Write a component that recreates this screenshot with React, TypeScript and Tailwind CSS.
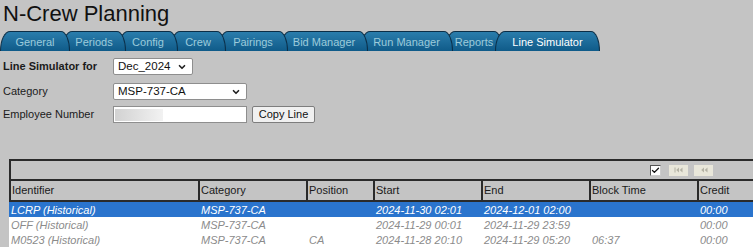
import { ChevronDown, Check } from "lucide-react";

interface Tab {
  label: string;
  width: string;
  z: string;
  active?: boolean;
}

const tabs: Tab[] = [
  { label: "General", width: "w-[70px]", z: "z-[9]" },
  { label: "Periods", width: "w-[64px]", z: "z-[8]" },
  { label: "Config", width: "w-[60px]", z: "z-[7]" },
  { label: "Crew", width: "w-[56px]", z: "z-[6]" },
  { label: "Pairings", width: "w-[70px]", z: "z-[5]" },
  { label: "Bid Manager", width: "w-[88px]", z: "z-[4]" },
  { label: "Run Manager", width: "w-[93px]", z: "z-[3]" },
  { label: "Reports", width: "w-[58px]", z: "z-[2]" },
  { label: "Line Simulator", width: "w-[105px]", z: "z-[10]", active: true },
];

interface Row {
  id: string;
  category: string;
  position: string;
  start: string;
  end: string;
  block: string;
  credit: string;
  selected?: boolean;
}

const rows: Row[] = [
  {
    id: "LCRP (Historical)",
    category: "MSP-737-CA",
    position: "",
    start: "2024-11-30 02:01",
    end: "2024-12-01 02:00",
    block: "",
    credit: "00:00",
    selected: true,
  },
  {
    id: "OFF (Historical)",
    category: "MSP-737-CA",
    position: "",
    start: "2024-11-29 00:01",
    end: "2024-11-29 23:59",
    block: "",
    credit: "00:00",
  },
  {
    id: "M0523 (Historical)",
    category: "MSP-737-CA",
    position: "CA",
    start: "2024-11-28 20:10",
    end: "2024-11-29 05:20",
    block: "06:37",
    credit: "00:00",
  },
];

const headers = ["Identifier", "Category", "Position", "Start", "End", "Block Time", "Credit"];
const cols = "grid grid-cols-[189px_108px_67px_108px_108px_108px_90px]";

function FakeSelect({ value, width }: { value: string; width: string }) {
  return (
    <div
      className={`${width} h-[17px] bg-white border border-[#8e8e8e] rounded-[2px] flex items-center justify-between pl-[4px] pr-[5px] text-[11.5px] text-[#111]`}
    >
      <span>{value}</span>
      <ChevronDown size={10} strokeWidth={4} className="text-[#222]" />
    </div>
  );
}

function NavButton({ first }: { first?: boolean }) {
  return (
    <div className="w-[19px] h-[11px] bg-[#e9e7da] flex items-center justify-center">
      <svg width="9" height="6" viewBox="0 0 9 6" className="text-[#b4b2a4]">
        {first && <rect x="0.5" y="0.5" width="1" height="5" fill="currentColor" />}
        <path d="M5 0.5 L2.2 3 L5 5.5 Z" fill="currentColor" />
        <path d="M8.5 0.5 L5.7 3 L8.5 5.5 Z" fill="currentColor" />
      </svg>
    </div>
  );
}

export default function App() {
  return (
    <div
      className="w-[753px] h-[247px] overflow-hidden bg-[#c4c4c4] text-[#1b1b1b]"
      style={{ fontFamily: '"Liberation Sans", Arial, sans-serif' }}
    >
      <div className="h-[31px] pl-[3px] pt-[1px] text-[22px] leading-[26px] text-[#111]">
        N-Crew Planning
      </div>

      <div className="flex h-[20px]">
        {tabs.map((t, i) => (
          <div
            key={t.label}
            className={`relative ${t.z} ${t.width} ${i > 0 ? "-ml-[8px]" : ""} h-[20px] flex items-center justify-center pt-[2px] text-[11px] border border-b-0 border-[#0b2e47] rounded-tl-[10px_20px] rounded-tr-[9px_20px] bg-linear-to-b from-[#2a7dac] to-[#0f5b89] ${
              t.active ? "text-white" : "text-[#9ccbdb]"
            }`}
          >
            {t.label}
          </div>
        ))}
      </div>

      <div className="pl-[3px] text-[11px]">
        <div className="flex items-center mt-[7px] h-[17px]">
          <div className="w-[110px] font-bold">Line Simulator for</div>
          <FakeSelect value="Dec_2024" width="w-[80px]" />
        </div>
        <div className="flex items-center mt-[8px] h-[17px]">
          <div className="w-[110px]">Category</div>
          <FakeSelect value="MSP-737-CA" width="w-[134px]" />
        </div>
        <div className="flex items-center mt-[6px] h-[17px]">
          <div className="w-[110px]">Employee Number</div>
          <div className="w-[134px] h-[17px] bg-white border border-[#8e8e8e] flex items-center pl-[1px]">
            <div className="w-[48px] h-[12px] bg-linear-to-r from-[#d2d2d2] to-[#f2f2f2]" />
          </div>
          <button className="ml-[5px] w-[63px] h-[17px] bg-[#f0f0f0] border border-[#7d7d7d] rounded-[2px] text-[11px] text-[#111] leading-none">
            Copy Line
          </button>
        </div>
      </div>

      <div className="mt-[36px] ml-[9px] w-[770px]">
        <div className="h-[22px] border-y-2 border-l-2 border-[#2a2a2a] flex items-center pl-[639px] gap-[8px]">
          <div className="w-[11px] h-[11px] bg-white border-t border-l border-[#555] border-r border-b border-r-[#ccc] border-b-[#ccc] flex items-center justify-center">
            <Check size={9} strokeWidth={3.5} className="text-[#111]" />
          </div>
          <NavButton first />
          <div className="-ml-[2px]">
            <NavButton />
          </div>
          <div className="ml-[36px] w-[2px] h-[3px] bg-[#333] -mt-[4px]" />
        </div>

        <div className={`${cols} h-[21px] border-b-2 border-[#2a2a2a]`}>
          {headers.map((h) => (
            <div
              key={h}
              className="border-l-2 border-[#2a2a2a] pl-[1px] text-[11px] text-[#1a1a1a] flex items-center"
            >
              {h}
            </div>
          ))}
        </div>

        {rows.map((r) => (
          <div
            key={r.id}
            className={`${cols} h-[15px] items-center italic text-[11px] ${
              r.selected ? "bg-[#2a74cd] text-white" : "bg-white text-[#8b8b8b]"
            }`}
          >
            <div className="pl-[2px]">{r.id}</div>
            <div className="pl-[3px]">{r.category}</div>
            <div className="pl-[3px]">{r.position}</div>
            <div className="pl-[3px]">{r.start}</div>
            <div className="pl-[3px]">{r.end}</div>
            <div className="pl-[3px]">{r.block}</div>
            <div className="pl-[3px]">{r.credit}</div>
          </div>
        ))}
      </div>
    </div>
  );
}
